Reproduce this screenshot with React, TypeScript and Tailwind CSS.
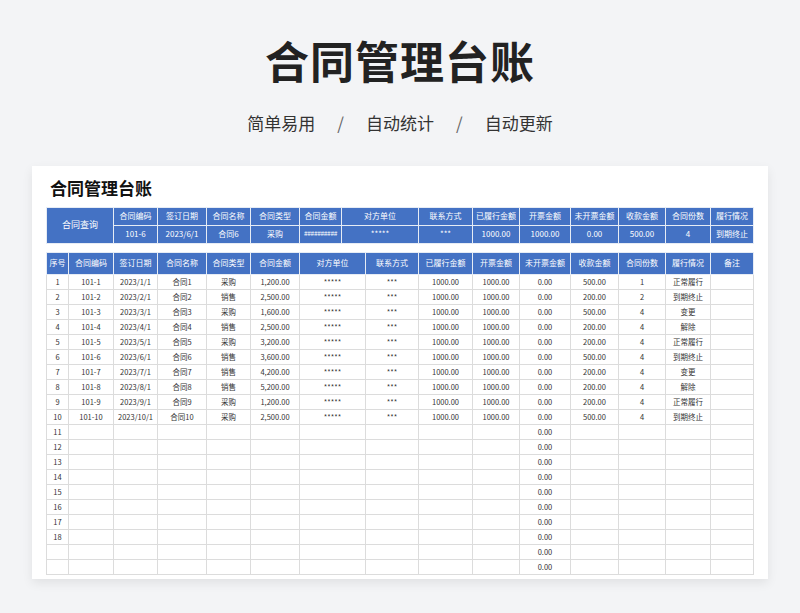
import React from "react";

const W = [22, 45, 44, 49, 44, 49, 66, 53, 54, 47, 51, 48, 47, 45, 43];
const heads = ["序号","合同编码","签订日期","合同名称","合同类型","合同金额","对方单位","联系方式","已履行金额","开票金额","未开票金额","收款金额","合同份数","履行情况","备注"];
const types = ["采购","销售","采购","销售","采购","销售","销售","销售","采购","采购"];
const amts = ["1,200.00","2,500.00","1,600.00","2,500.00","3,200.00","3,600.00","4,200.00","5,200.00","1,200.00","2,500.00"];
const recv = ["500.00","200.00","500.00","200.00","200.00","500.00","200.00","200.00","200.00","500.00"];
const cnt = ["1","2","4","4","4","4","4","4","4","4"];
const st = ["正常履行","到期终止","变更","解除","正常履行","到期终止","变更","解除","正常履行","到期终止"];

const rows: string[][] = [];
for (let i = 0; i < 20; i++) {
  if (i < 10) {
    rows.push([String(i+1), `101-${i+1}`, `2023/${i+1}/1`, `合同${i+1}`, types[i], amts[i], "*****", "***", "1000.00", "1000.00", "0.00", recv[i], cnt[i], st[i], ""]);
  } else {
    rows.push([i < 18 ? String(i+1) : "", "", "", "", "", "", "", "", "", "", "0.00", "", "", "", ""]);
  }
}

const font = { fontFamily: '"Noto Sans CJK SC", "Noto Sans", sans-serif' };

export default function App() {
  return (
    <div className="w-[800px] h-[613px] bg-[#f3f4f6] overflow-hidden flex flex-col items-center" style={font}>
      <h1 className="mt-[34px] text-[44px] leading-[52px] font-bold text-[#222] tracking-[1px]">合同管理台账</h1>
      <div className="mt-[24px] text-[17px] text-[#333] flex gap-[22px]">
        <span>简单易用</span><span className="text-[#666]">/</span><span>自动统计</span><span className="text-[#666]">/</span><span>自动更新</span>
      </div>
      <div className="mt-[30px] w-[736px] h-[413px] bg-white shadow-[0_4px_10px_rgba(0,0,0,0.08)] px-[14px] overflow-hidden">
        <div className="pt-[9px] h-[41px] text-[17px] font-bold text-[#111] pl-[4px]">合同管理台账</div>
        <table className="border-collapse table-fixed text-[8px] text-white" style={{ width: 707 }}>
          <colgroup>
            {[67,44,49,44,49,42,77,54,47,51,48,47,45,43].map((w,i)=><col key={i} style={{width:w}}/>)}
          </colgroup>
          <tbody>
            <tr className="h-[18px]">
              <td rowSpan={2} className="bg-[#4472c4] border border-[#e6ecf5] text-center text-[9px]">合同查询</td>
              {["合同编码","签订日期","合同名称","合同类型","合同金额","对方单位","联系方式","已履行金额","开票金额","未开票金额","收款金额","合同份数","履行情况"].map(h=>(
                <td key={h} className="bg-[#4472c4] border border-[#e6ecf5] text-center whitespace-nowrap overflow-hidden">{h}</td>
              ))}
            </tr>
            <tr className="h-[18px]">
              {["101-6","2023/6/1","合同6","采购","##########","*****","***","1000.00","1000.00","0.00","500.00","4","到期终止"].map((h,i)=>(
                <td key={i} className={`bg-[#4472c4] border border-[#e6ecf5] text-center whitespace-nowrap overflow-hidden ${i===4?"text-[6.5px] tracking-[-0.3px]":""}`}>{h}</td>
              ))}
            </tr>
          </tbody>
        </table>
        <table className="mt-[8px] border-collapse table-fixed text-[7.5px] text-[#333]" style={{ width: 707 }}>
          <colgroup>{W.map((w,i)=><col key={i} style={{width:w}}/>)}</colgroup>
          <thead>
            <tr className="h-[22px]">
              {heads.map(h=>(
                <th key={h} className="bg-[#4472c4] border border-[#e6ecf5] text-white font-normal text-[8px] whitespace-nowrap">{h}</th>
              ))}
            </tr>
          </thead>
          <tbody>
            {rows.map((r,i)=>(
              <tr key={i} className="h-[15px]">
                {r.map((c,j)=>(
                  <td key={j} className="border border-[#dcdcdc] text-center whitespace-nowrap overflow-hidden leading-[13px]">{c}</td>
                ))}
              </tr>
            ))}
          </tbody>
        </table>
      </div>
    </div>
  );
}
